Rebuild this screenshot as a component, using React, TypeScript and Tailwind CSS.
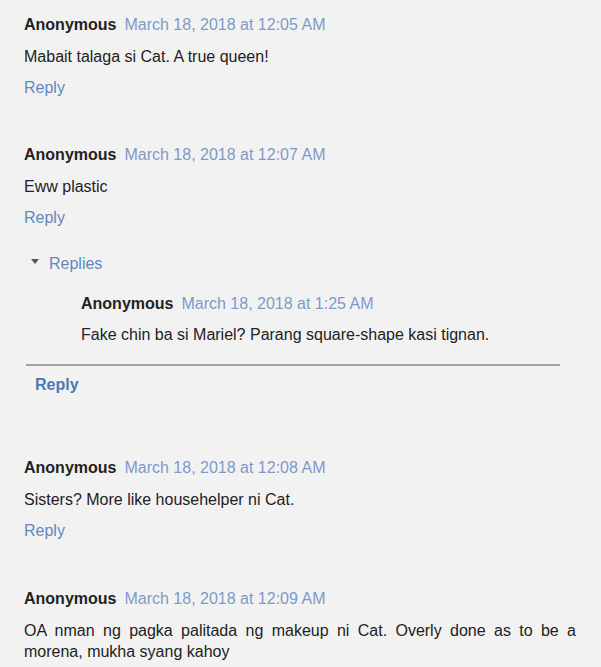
const font = { fontFamily: '"Liberation Sans", Arial, sans-serif' };

type Props = { time: string; text: string; className?: string };

const Header = ({ time }: { time: string }) => (
    <div className="leading-[20px] text-[16px] whitespace-nowrap">
        <span className="font-bold text-[#222]">Anonymous</span>
        <span className="ml-[8px] text-[#7d9bc9]">{time}</span>
    </div>
);

const Comment = ({ time, text, className }: Props) => (
    <div className={className}>
        <Header time={time} />
        <div className="mt-[11px] text-[16px] leading-[21px] text-[#222] text-justify">{text}</div>
        <div className="mt-[11px] text-[16px] leading-[20px] text-[#5f88c2]">Reply</div>
    </div>
);

export default function App() {
    return (
        <div style={font} className="w-[601px] h-[667px] bg-[#f2f2f2] overflow-hidden pl-[24px] pr-[25px] pt-[15px]">
            <Comment time="March 18, 2018 at 12:05 AM" text="Mabait talaga si Cat. A true queen!" />
            <Comment className="mt-[47px]" time="March 18, 2018 at 12:07 AM" text="Eww plastic" />

            <div className="mt-[26px] flex items-center leading-[20px] text-[16px]">
                <span className="ml-[7px] w-0 h-0 border-l-[4px] border-r-[4px] border-t-[5px] border-l-transparent border-r-transparent border-t-[#555] mb-[6px]" />
                <span className="ml-[10px] text-[#5f88c2]">Replies</span>
            </div>

            <div className="mt-[20px] pl-[57px]">
                <Header time="March 18, 2018 at 1:25 AM" />
                <div className="mt-[11px] text-[16px] leading-[20px] text-[#222]">
                    Fake chin ba si Mariel? Parang square-shape kasi tignan.
                </div>
            </div>
            <div className="mt-[19px] w-[534px] ml-[2px] h-[2px] bg-[#a3a3a3]" />
            <div className="mt-[9px] pl-[11px] text-[16px] leading-[20px] font-bold text-[#4b78b4]">Reply</div>

            <Comment className="mt-[63px]" time="March 18, 2018 at 12:08 AM" text="Sisters? More like househelper ni Cat." />
            <Comment
                className="mt-[48px]"
                time="March 18, 2018 at 12:09 AM"
                text="OA nman ng pagka palitada ng makeup ni Cat. Overly done as to be a morena, mukha syang kahoy"
            />
        </div>
    );
}
